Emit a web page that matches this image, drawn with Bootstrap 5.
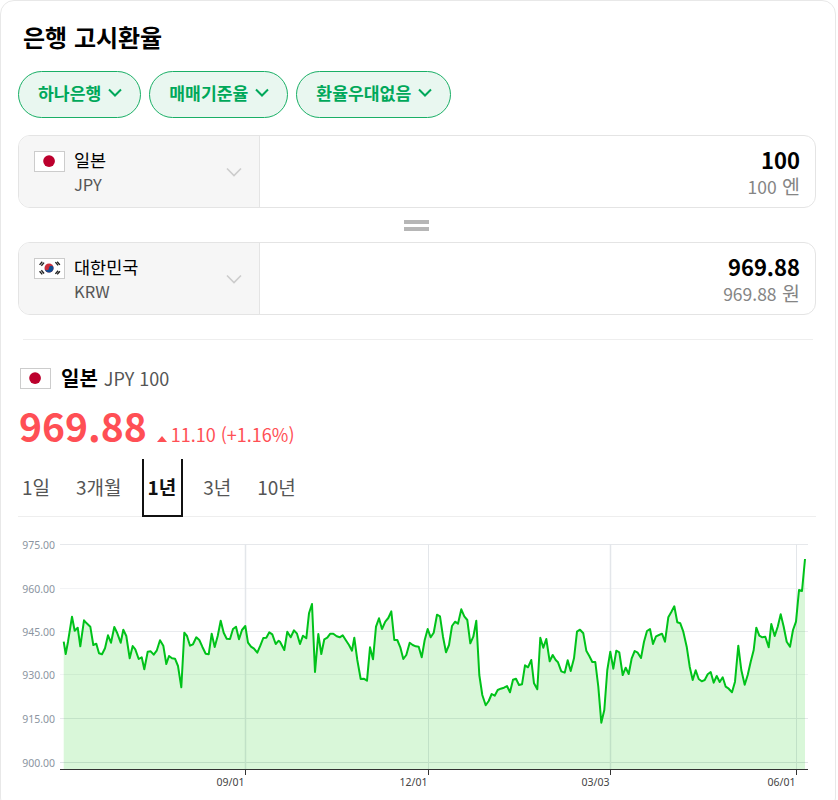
<!DOCTYPE html>
<html lang="ko">
<head>
  <meta charset="UTF-8">
  <meta name="viewport" content="width=device-width, initial-scale=1.0">
  <title>은행 고시환율</title>
  <link href="https://cdn.jsdelivr.net/npm/bootstrap@5.3.2/dist/css/bootstrap.min.css" rel="stylesheet">
  <style>
    html, body { height: 800px; overflow: hidden; }
    body { font-family: "Noto Sans CJK KR", "Noto Sans", sans-serif; background: #fff; color: #000; }
    .rate-panel { width: 836px; height: 812px; border: 1px solid #e8e8e8; border-radius: 14px; padding: 0 19px 0 17px; overflow: hidden; }
    .rate-title { font-size: 24px; font-weight: 700; line-height: 36px; margin: 18px 0 16px 5px; }
    .pick-btn { height: 47px; padding: 0 18px 4px 19px; font-size: 17.2px; font-weight: 700; line-height: 1; color: #00a85a; background: #e9f7f0; border: 1px solid #1aaf66; gap: 7px; }
    .pick-btn:hover { color: #00a85a; background: #e9f7f0; border-color: #1aaf66; }
    .pick-row { margin-bottom: 17px; }
    .conv-row { height: 73px; border: 1px solid #e4e4e4; border-radius: 12px; overflow: hidden; }
    .conv-left { width: 241px; flex: none; background: #f6f6f6; border-right: 1px solid #e4e4e4; padding: 15px 17px 0 15px; }
    .conv-names { margin: -4px 0 0 9px; line-height: 25px; }
    .conv-name { font-size: 17.5px; }
    .conv-code { font-size: 16.5px; color: #555; }
    .conv-chev { margin: 16px 0 0 auto; }
    .flag-box { width: 31px; height: 21px; flex: none; border: 1px solid #ccc; background: #fff; display: block; }
    .conv-right { padding: 9px 15px 0 0; }
    .conv-num { font-size: 22px; font-weight: 700; line-height: 29px; }
    .conv-unit { font-size: 19.5px; color: #858585; line-height: 24px; }
    .conv-unit span { font-size: 17.5px; }
    .equal-mark { height: 34px; padding: 4px 2px 0 0; }
    .equal-mark i { display: block; width: 25px; height: 4px; background: #b6b6b6; margin-bottom: 3px; }
    .sect-line { margin: 24px 3px 27px 5px; border-top: 1px solid #eee; }
    .cur-name { font-size: 20px; font-weight: 700; margin-left: 10px; }
    .cur-code { font-size: 18px; color: #555; margin-left: 6px; }
    .cur-head { margin-left: 2px; height: 22px; }
    .price-row { color: #ff4f55; margin: 8px 0 0 1px; height: 60px; }
    .price-big { font-size: 39px; font-weight: 700; line-height: 56px; }
    .price-diff { font-size: 18px; margin-left: 4px; }
    .price-tri { margin: 0 0 6px 10px; }
    .range-tabs { height: 58px; border-bottom: 1px solid #eee; margin-top: 2px; }
    .range-tab { font-size: 19px; color: #555; padding: 0 4px; margin-right: 18px; height: 58px; line-height: 56px; }
    .range-tab.on { color: #111; font-weight: 700; border: 2px solid #111; border-top: 0; padding: 0 5px 0 4px; margin-right: 16px; margin-left: -2px; }
    .rate-chart { display: block; margin-left: -18px; }
    .rate-chart text { font-family: "Noto Sans", sans-serif; font-size: 10.5px; }
  </style>
</head>
<body>
<div class="rate-panel">
  <h1 class="rate-title">은행 고시환율</h1>

  <div class="d-flex gap-2 pick-row">
    <button class="btn pick-btn rounded-pill d-flex align-items-center">하나은행
      <svg width="14" height="9" viewBox="0 0 14 9"><path d="M1 1.500l6 6 6-6" fill="none" stroke="#00a85a" stroke-width="2"/></svg></button>
    <button class="btn pick-btn rounded-pill d-flex align-items-center">매매기준율
      <svg width="14" height="9" viewBox="0 0 14 9"><path d="M1 1.500l6 6 6-6" fill="none" stroke="#00a85a" stroke-width="2"/></svg></button>
    <button class="btn pick-btn rounded-pill d-flex align-items-center">환율우대없음
      <svg width="14" height="9" viewBox="0 0 14 9"><path d="M1 1.500l6 6 6-6" fill="none" stroke="#00a85a" stroke-width="2"/></svg></button>
  </div>

  <div class="conv-row d-flex">
    <div class="conv-left d-flex align-items-start">
      <svg class="flag-box" viewBox="0 0 31 21"><circle cx="15" cy="10" r="6.500" fill="#bc002d"/></svg>
      <div class="conv-names">
        <div class="conv-name">일본</div>
        <div class="conv-code">JPY</div>
      </div>
      <svg class="conv-chev" width="16" height="10" viewBox="0 0 16 10"><path d="M1 1.500l7 7 7-7" fill="none" stroke="#ccc" stroke-width="1.6"/></svg>
    </div>
    <div class="conv-right flex-grow-1 text-end">
      <div class="conv-num">100</div>
      <div class="conv-unit"><span>100</span> 엔</div>
    </div>
  </div>

  <div class="equal-mark d-flex flex-column align-items-center justify-content-center"><i></i><i></i></div>

  <div class="conv-row d-flex">
    <div class="conv-left d-flex align-items-start">
      <svg class="flag-box" viewBox="0 0 31 21">
        <circle cx="15" cy="10" r="5" fill="#cd2e3a"/>
        <path d="M10 10a5 5 0 0 0 10 0a2.500 2.500 0 0 0-5 0a2.500 2.500 0 0 1-5 0z" fill="#0f4d92"/>
        <g stroke="#222" stroke-width="1.500">
          <path d="M4.500 6.500l3-3.500M6.500 7.500l3-3.500"/>
          <path d="M22 3.500l3 3.500M24 3l3 3.500"/>
          <path d="M4.500 13.500l3 3.500M6.500 12.500l3 3.500"/>
          <path d="M22 16.500l3-3.500M24 17l3-3.500"/>
        </g>
      </svg>
      <div class="conv-names">
        <div class="conv-name">대한민국</div>
        <div class="conv-code">KRW</div>
      </div>
      <svg class="conv-chev" width="16" height="10" viewBox="0 0 16 10"><path d="M1 1.500l7 7 7-7" fill="none" stroke="#ccc" stroke-width="1.6"/></svg>
    </div>
    <div class="conv-right flex-grow-1 text-end">
      <div class="conv-num">969.88</div>
      <div class="conv-unit"><span>969.88</span> 원</div>
    </div>
  </div>

  <div class="sect-line"></div>

  <div class="cur-head d-flex align-items-center">
    <svg class="flag-box" viewBox="0 0 31 21"><circle cx="15" cy="10" r="6.500" fill="#bc002d"/></svg>
    <span class="cur-name">일본</span>
    <span class="cur-code">JPY 100</span>
  </div>

  <div class="price-row d-flex align-items-baseline">
    <span class="price-big">969.88</span>
    <svg class="price-tri" width="10" height="6" viewBox="0 0 10 6"><path d="M5 0l5 6H0z" fill="#ff4f55"/></svg>
    <span class="price-diff">11.10 (+1.16%)</span>
  </div>

  <div class="range-tabs d-flex">
    <div class="range-tab">1일</div>
    <div class="range-tab">3개월</div>
    <div class="range-tab on">1년</div>
    <div class="range-tab">3년</div>
    <div class="range-tab">10년</div>
  </div>

  <svg class="rate-chart" id="rateChart" width="836" height="283" viewBox="0 517 836 283"></svg>
</div>

<script>
  // 차트 좌표는 3배 크기 기준 [x, y] 묶음, 구간마다 x 시작값이 다르다
  const parts = [
    [0, [191,335,197,372,204,335,216,260,224,302,233,293,241,349,252,271,260,280,271,290,280,345,289,341,297,370,306,373,315,355,324,316,333,338,343,291,352,310,362,338,370,299,379,318,389,385,398,348,406,358,416,387,425,382,433,418,443,365,452,364,461,374,470,362,480,331,490,347,499,402,507,378,516,385,525,386,534,408,544,472,553,308,561,318,570,347,579,343,589,322,598,330,607,350,617,371,626,373,635,311,644,351,653,318,662,272,671,308,680,326,690,327,699,297,708,290,717,328,726,300,736,288,744,338,753,350,762,356,772,368,781,347,790,324,799,323,808,307,817,313,827,342,836,332]],
    [280, [0,335,13,360,22,305,32,322,42,301,51,311,60,342,69,317,79,325,87,250,96,222,105,426,115,312,124,372,133,328,142,323,151,311,160,311,170,319,179,322,188,316,197,330,207,345,216,362,223,323,232,390,242,447,251,446,261,452,270,352,279,388,288,290,297,265,306,297,316,275,325,264,334,244,343,330,352,330,361,352,370,387,379,375,389,338,398,345,407,349,416,350,425,382,434,330,443,297,452,322,461,308,471,254,480,259,489,320,498,367,507,345,516,288,525,275,534,281,544,238,553,259,562,270,571,340,580,320,589,272,598,435,607,495,617,526,626,513,635,492,644,497,653,480,662,476,672,473,681,468,690,487,699,449,708,446,717,465,726,463,735,406,744,412,754,390,762,460,772,478,781,323,790,353,799,327,809,394,818,375,827,390]],
    [558, [0,397,10,424,20,428,29,391,38,423,48,385,57,305,66,299,76,310,85,362,94,378,103,396,112,396,121,470,130,578,139,540,148,420,157,365,166,416,175,362,184,367,194,435,203,413,212,432,221,385,230,363,239,368,249,384,258,335,267,303,276,297,285,342,294,319,303,315,312,311,321,335,331,262,340,246,349,229,358,277,367,280,376,305,386,350,395,410,404,450,413,421,422,447,431,454,440,450,449,433,458,426,467,458,476,438,485,456,494,442,503,470,512,476,522,487,531,455,541,347,550,420,560,464,569,435,578,395,587,360,595,293,604,317,613,322,622,320,632,352,640,282,650,318,659,290,668,253,677,290,686,335,696,350,705,300,714,275,723,180,732,183,741,87]]
  ];
  const pts = [];
  parts.forEach(([off, arr]) => {
    for (let i = 0; i < arr.length; i += 2) {
      pts.push((off + arr[i] / 3).toFixed(1) + "," + (530 + arr[i + 1] / 3).toFixed(1));
    }
  });
  const lastX = pts[pts.length - 1].split(",")[0];
  const firstX = pts[0].split(",")[0];

  let svg = "";
  const labels = ["975.00", "960.00", "945.00", "930.00", "915.00", "900.00"];
  const gridY = [544.5, 588.5, 631.5, 674.5, 718.5, 762.5];
  const gridCol = ["#e6e8eb", "#f2f3f5", "#e9ebee", "#f2f3f5", "#e6e8eb", "#dfe2e5"];
  gridY.forEach((y, i) => {
    svg += `<line x1="60" x2="808" y1="${y}" y2="${y}" stroke="${gridCol[i]}"/>`;
    svg += `<text x="55" y="${y + 4}" text-anchor="end" fill="#8b95a1">${labels[i]}</text>`;
  });
  const ticks = [[245.5, "09/01"], [428.5, "12/01"], [610.5, "03/03"], [796.5, "06/01"]];
  ticks.forEach(([x]) => {
    svg += `<line x1="${x}" x2="${x}" y1="544" y2="769" stroke="#e3e6ea" stroke-width="${x === 428.5 || x === 796.5 ? 1 : 1.5}"/>`;
  });
  svg += `<polygon points="${firstX},769 ${pts.join(" ")} ${lastX},769" fill="#00c800" fill-opacity="0.15"/>`;
  svg += `<polyline points="${pts.join(" ")}" fill="none" stroke="#00c21a" stroke-width="2" stroke-linejoin="round"/>`;
  svg += `<line x1="60" x2="808" y1="769.500" y2="769.500" stroke="#333"/>`;
  ticks.forEach(([x, t]) => {
    svg += `<line x1="${x}" x2="${x}" y1="769" y2="775" stroke="#333"/>`;
    svg += `<text x="${x - 1}" y="786" text-anchor="end" fill="#444">${t}</text>`;
  });
  document.getElementById("rateChart").innerHTML = svg;
</script>
<script src="https://cdn.jsdelivr.net/npm/bootstrap@5.3.2/dist/js/bootstrap.bundle.min.js"></script>
</body>
</html>
